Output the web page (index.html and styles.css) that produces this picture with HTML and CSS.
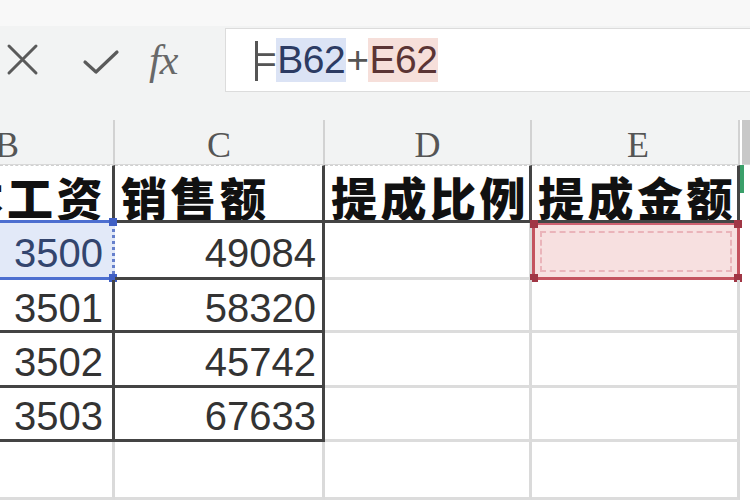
FILE: index.html
```html
<!DOCTYPE html>
<html lang="zh">
<head>
<meta charset="utf-8">
<link rel="stylesheet" href="styles.css">
</head>
<body>
<div class="app">
  <div class="toolbar">
    <div class="icons">
      <svg class="ic-x" width="40" height="40" viewBox="0 0 40 40"><path d="M6 6 L33 33 M33 6 L6 33" stroke="#5a5a5a" stroke-width="3" fill="none" stroke-linecap="round"/></svg>
      <svg class="ic-ok" width="40" height="40" viewBox="0 0 40 40"><path d="M4 21 L15 31 L36 11" stroke="#5a5a5a" stroke-width="3.2" fill="none" stroke-linecap="round" stroke-linejoin="round"/></svg>
      <span class="fx">fx</span>
    </div>
    <div class="formula">
      <span class="caret"></span><span class="eq">=</span><span class="ref-b">B62</span><span class="plus">+</span><span class="ref-e">E62</span>
    </div>
  </div>
  <div class="sheet">
    <div class="ch ch-b">B</div>
    <div class="ch">C</div>
    <div class="ch">D</div>
    <div class="ch ch-e">E</div>
    <div class="ch ch-f"></div>

    <div class="c t t-b">基本工资</div>
    <div class="c t">销售额</div>
    <div class="c t">提成比例</div>
    <div class="c t">提成金额</div>
    <div class="c f f-t"></div>

    <div class="c n b sel-b">3500<i class="mk mk-tr"></i><i class="mk mk-br"></i></div>
    <div class="c n cc">49084</div>
    <div class="c g"></div>
    <div class="c g sel-e"><i class="mk mk-tl"></i><i class="mk mk-tr"></i><i class="mk mk-bl"></i><i class="mk mk-br"></i></div>
    <div class="c f"></div>

    <div class="c n b">3501</div>
    <div class="c n cc">58320</div>
    <div class="c g"></div>
    <div class="c g"></div>
    <div class="c f"></div>

    <div class="c n b">3502</div>
    <div class="c n cc">45742</div>
    <div class="c g"></div>
    <div class="c g"></div>
    <div class="c f"></div>

    <div class="c n b">3503</div>
    <div class="c n cc">67633</div>
    <div class="c g"></div>
    <div class="c g"></div>
    <div class="c f"></div>

    <div class="c g"></div>
    <div class="c g"></div>
    <div class="c g"></div>
    <div class="c g"></div>
    <div class="c f"></div>
  </div>
</div>
</body>
</html>
```
FILE: styles.css
```css
* { box-sizing: border-box; }
html, body { margin: 0; padding: 0; }
body {
  width: 750px;
  height: 500px;
  overflow: hidden;
  background: #ffffff;
  font-family: "Liberation Sans", "Noto Sans CJK SC", sans-serif;
}
.app { width: 750px; height: 500px; overflow: hidden; }

.toolbar {
  height: 120px;
  background: linear-gradient(#f8f8f8 0, #f8f8f8 26px, #f2f3f3 26px);
  display: flex;
  align-items: flex-start;
  padding-top: 28px;
}
.icons {
  width: 225px;
  display: flex;
  align-items: center;
  height: 64px;
  padding-left: 3px;
}
.ic-x { margin-right: 38px; }
.ic-ok { margin-right: 28px; margin-top: 2px; }
.fx {
  font-family: "Liberation Serif", serif;
  font-style: italic;
  font-size: 42px;
  color: #686868;
  letter-spacing: -1px;
}
.formula {
  flex: 1;
  height: 64px;
  background: #ffffff;
  border: 1px solid #dcdcdc;
  border-right: none;
  display: flex;
  align-items: center;
  padding-left: 28px;
  font-size: 39px;
  letter-spacing: -0.5px;
  color: #3a3a3a;
  position: relative;
}
.caret {
  position: absolute;
  left: 29px;
  top: 12px;
  width: 3px;
  height: 40px;
  background: #555;
}
.eq { color: #555; }
.ref-b { background: #dbe3f5; color: #2c3b63; padding: 0 1px; }
.plus { color: #555; }
.ref-e { background: #f6dfda; color: #5b3434; padding: 0 1px; }

.sheet {
  display: grid;
  grid-template-columns: 115px 210px 207px 208px 10px;
  grid-template-rows: 45px 58px 57px 53px 55px 54px 58px;
}
.ch {
  background: #f2f3f3;
  border-right: 2px solid #d2d2d2;
  border-bottom: 1px solid #d8d8d8;
  display: flex;
  align-items: flex-end;
  justify-content: center;
  padding-bottom: 1px;
  font-family: "Liberation Serif", serif;
  font-size: 36px;
  color: #555;
  line-height: 1;
}
.ch-b { justify-content: flex-start; margin-left: -5px; padding-left: 0; }
.ch-e { border-right: 2px solid #d2d2d2; padding-left: 6px; }
.ch-f { background: #c8c8c8; border-right: none; margin-left: 2px; }

.c {
  position: relative;
  display: flex;
  align-items: center;
  overflow: hidden;
  white-space: nowrap;
}
.t {
  font-family: "Noto Sans CJK SC", sans-serif;
  font-weight: 900;
  font-size: 46px;
  letter-spacing: 3.5px;
  color: #111;
  align-items: flex-end;
  padding-left: 6px;
  line-height: 1;
  padding-bottom: 1px;
  border-right: 3px solid #444;
  border-bottom: 3px solid #444;
  border-top: 1px dashed #cfcfcf;
}
.t-b { justify-content: flex-end; padding-left: 0; padding-right: 6px; border-bottom-color: #4d6fd0; }
.f { border-top: none; }
.f-t { box-shadow: inset 4px 0 0 #3aa06a; height: 28px; }

.n {
  justify-content: flex-end;
  font-size: 40px;
  color: #333;
  padding-top: 6px;
  border-right: 3px solid #444;
  border-bottom: 3px solid #444;
}
.b { padding-right: 9px; }
.cc { padding-right: 6px; }
.g {
  border-right: 3px solid #dadada;
  border-bottom: 3px solid #dcdcdc;
}

.sel-b {
  background: #e2e9f8;
  color: #33456e;
  border-bottom-color: #4d6fd0;
  border-right: 3px dotted #6680cc;
  overflow: visible;
}
.sel-e {
  background: #f7e0e0;
  border: 3px solid #c4535f;
  border-top: 2px solid #d06070;
  outline: 2px dashed #eab4ba;
  outline-offset: -10px;
  overflow: visible;
}
.mk {
  position: absolute;
  width: 8px;
  height: 8px;
  background: #a03645;
}
.sel-b .mk { background: #3f5fc4; }
.mk-tl { left: -5px; top: -5px; }
.mk-tr { right: -5px; top: -5px; }
.mk-bl { left: -5px; bottom: -5px; }
.mk-br { right: -5px; bottom: -5px; }
```
